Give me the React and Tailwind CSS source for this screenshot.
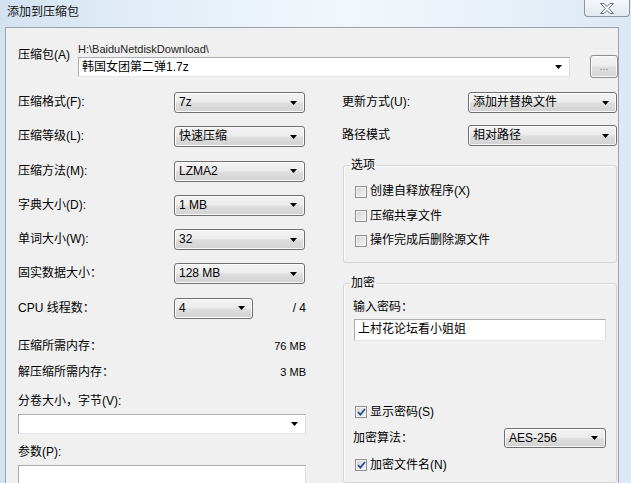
import React from 'react'

const Arrow = () => (
  <svg width="7" height="4" viewBox="0 0 7 4" className="shrink-0">
    <path d="M0 0h7L3.5 4z" fill="#000" />
  </svg>
)

// Win7 style dropdown list (button look)
const Drop = ({ w, h = 'h-[21px]', children }) => (
  <div className={`flex items-center justify-between ${h} ${w} rounded-[3px] border border-[#707070] bg-[linear-gradient(#f3f3f3,#ececec_48%,#dedede_52%,#d2d2d2)] shadow-[inset_0_0_0_1px_#fbfbfb] pl-[4px] pr-[7px]`}>
    <span className="leading-[15px] whitespace-nowrap">{children}</span>
    <Arrow />
  </div>
)

// editable combo box (white)
const EditCombo = ({ className, children }) => (
  <div className={`flex items-center justify-between h-[20px] bg-white border border-[#abadb3] border-b-[#e3e9ef] border-r-[#dbdfe6] pl-[3px] pr-[7px] ${className}`}>
    <span className="leading-[15px] whitespace-nowrap">{children}</span>
    <Arrow />
  </div>
)

const Check = ({ checked, children }) => (
  <div className="flex items-center h-[15px] leading-[15px] whitespace-nowrap">
    <span className="w-[12px] h-[12px] mr-[3px] border border-[#8e8f8f] bg-[linear-gradient(135deg,#cfd2d6,#f7f7f7)] shadow-[inset_0_0_0_1px_#f4f4f4] flex items-center justify-center">
      {checked && (
        <svg width="9" height="8" viewBox="0 0 9 8">
          <path d="M1 4.2l2.4 2.4L8 1" fill="none" stroke="#2b4f92" strokeWidth="1.8" />
        </svg>
      )}
    </span>
    {children}
  </div>
)

const Row = ({ label, children, lw = 'w-[156px]' }) => (
  <div className="flex items-center h-[21px]">
    <span className={`${lw} leading-[15px] whitespace-nowrap`}>{label}</span>
    {children}
  </div>
)

export default function App() {
  return (
    <div className="w-[631px] h-[483px] overflow-hidden flex flex-col bg-[linear-gradient(90deg,#d3e2f1,#e4eef8_25%,#f2f7fc_55%,#e8f0f8_80%,#dce8f4)] text-[12px] text-black font-[family-name:'Liberation_Sans','Noto_Sans_CJK_SC',sans-serif]">
      {/* title bar */}
      <div className="h-[27px] flex justify-between shrink-0">
        <div className="pl-[7px] pt-[5px] leading-[15px] text-[#111]">添加到压缩包</div>
        <div className="mr-[1px] w-[46px] h-[17px] rounded-b-[4px] border border-t-0 border-[#8a96a3] bg-[linear-gradient(#f4f7fa,#e3e9f0)] flex items-center justify-center">
          <svg width="14" height="11" viewBox="0 0 14 11">
            <path d="M0.5 0.5h3.5l3 3 3-3h3.5l-4.7 5 4.7 5h-3.5l-3-3-3 3H0.5l4.7-5z" fill="#f7f8fa" stroke="#6a7583" strokeWidth="1" />
          </svg>
        </div>
      </div>

      {/* client area */}
      <div className="flex-1 ml-[5px] mr-[12px] border-l border-t border-r border-[#98a3ae] bg-[#f0f0f0] pl-[12px] pt-[14px]">
        {/* archive path row */}
        <div className="flex items-start">
          <div className="w-[60px] mt-[6px] leading-[15px] whitespace-nowrap">压缩包(A)</div>
          <div className="flex flex-col w-[492px]">
            <div className="leading-[15px] text-[11px] text-[#222]">H:\BaiduNetdiskDownload\</div>
            <EditCombo className="w-full">韩国女团第二弹1.7z</EditCombo>
          </div>
          <div className="ml-[20px] mt-[13px] w-[28px] h-[23px] rounded-[3px] border border-[#8f8f8f] bg-[linear-gradient(#f4f4f4,#ededed_48%,#e0e0e0_52%,#d5d5d5)] shadow-[inset_0_0_0_1px_#fafafa] flex items-center justify-center text-[10px] text-[#777] leading-none">
            ...
          </div>
        </div>

        <div className="flex mt-[14px]">
          {/* left column */}
          <div className="w-[288px] flex flex-col">
            <div className="flex flex-col gap-[13.3px]">
              <Row label="压缩格式(F):"><Drop w="w-[131px]">7z</Drop></Row>
              <Row label="压缩等级(L):"><Drop w="w-[131px]">快速压缩</Drop></Row>
              <Row label="压缩方法(M):"><Drop w="w-[131px]">LZMA2</Drop></Row>
              <Row label="字典大小(D):"><Drop w="w-[131px]">1 MB</Drop></Row>
              <Row label="单词大小(W):"><Drop w="w-[131px]">32</Drop></Row>
              <Row label="固实数据大小："><Drop w="w-[131px]">128 MB</Drop></Row>
              <Row label="CPU 线程数：">
                <Drop w="w-[79px]">4</Drop>
                <span className="ml-auto leading-[15px]">/ 4</span>
              </Row>
            </div>
            <div className="mt-[20px] flex justify-between leading-[15px]">
              <span>压缩所需内存：</span>
              <span className="text-[11px]">76 MB</span>
            </div>
            <div className="mt-[11.5px] flex justify-between leading-[15px]">
              <span>解压缩所需内存：</span>
              <span className="text-[11px]">3 MB</span>
            </div>
            <div className="mt-[13.5px] leading-[15px]">分卷大小，字节(V):</div>
            <EditCombo className="mt-[5.5px] w-full" />
            <div className="mt-[10.5px] leading-[15px]">参数(P):</div>
            <div className="mt-[5.5px] h-[40px] bg-white border border-[#abadb3] border-r-[#dbdfe6]" />
          </div>

          {/* right column */}
          <div className="ml-[36px] w-[275px] flex flex-col">
            <Row label="更新方式(U):" lw="w-[126px]"><Drop w="w-[149px]">添加并替换文件</Drop></Row>
            <div className="mt-[12.3px]">
              <Row label="路径模式" lw="w-[126px]"><Drop w="w-[149px]">相对路径</Drop></Row>
            </div>

            <fieldset className="mt-[12px] ml-[1px] border border-[#d5d5d5] rounded-[3px] shadow-[inset_1px_1px_0_#fbfbfb]">
              <legend className="ml-[6px] px-[1px] leading-[15px]">选项</legend>
              <div className="pl-[11px] pt-[11px] pb-[14px] flex flex-col gap-[9.5px]">
                <Check>创建自释放程序(X)</Check>
                <Check>压缩共享文件</Check>
                <Check>操作完成后删除源文件</Check>
              </div>
            </fieldset>

            <fieldset className="mt-[12.5px] ml-[1px] border border-[#d5d5d5] rounded-[3px] shadow-[inset_1px_1px_0_#fbfbfb]">
              <legend className="ml-[6px] px-[1px] leading-[15px]">加密</legend>
              <div className="pl-[9px] pt-[9.5px] pb-[9px] flex flex-col">
                <div className="leading-[15px]">输入密码：</div>
                <div className="mt-[3.7px] ml-[1px] w-[252px] h-[22px] bg-white border border-[#abadb3] border-b-[#e3e9ef] border-r-[#dbdfe6] pl-[3px] flex items-center leading-[15px]">
                  上村花论坛看小姐姐
                </div>
                <div className="mt-[64px] ml-[2px]"><Check checked>显示密码(S)</Check></div>
                <div className="mt-[8.5px] w-[253px] flex items-center justify-between">
                  <span className="leading-[15px]">加密算法：</span>
                  <Drop w="w-[102px]" h="h-[20px]">AES-256</Drop>
                </div>
                <div className="mt-[9.5px] ml-[2px]"><Check checked>加密文件名(N)</Check></div>
              </div>
            </fieldset>
          </div>
        </div>
      </div>
    </div>
  )
}
